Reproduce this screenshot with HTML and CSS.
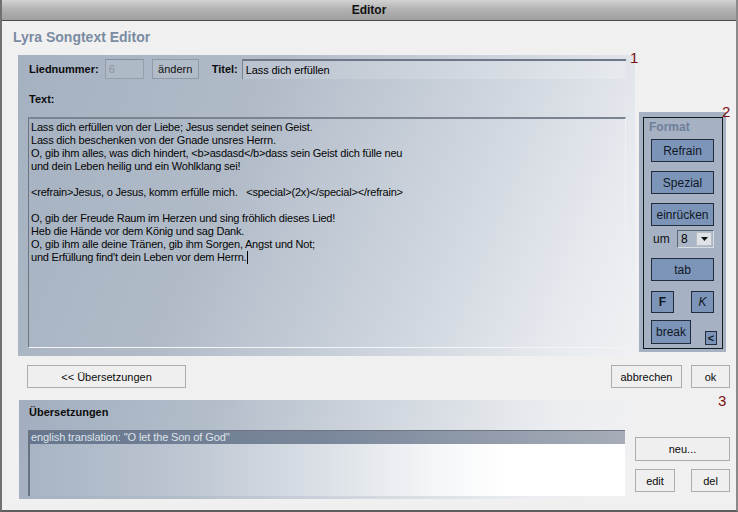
FILE: index.html
```html
<!DOCTYPE html>
<html lang="de">
<head>
<meta charset="utf-8">
<title>Editor</title>
<link rel="stylesheet" href="styles.css">
</head>
<body>
<div class="window">
  <header class="titlebar">Editor</header>
  <main class="content">
    <h1 class="app-title">Lyra Songtext Editor</h1>
    <div class="main-row">
      <section class="panel editor-panel">
        <div class="meta-row">
          <span class="lbl">Liednummer:</span>
          <span class="num-field">6</span>
          <button class="flat-btn">ändern</button>
          <span class="lbl title-lbl">Titel:</span>
          <span class="title-field">Lass dich erfüllen</span>
        </div>
        <div class="lbl text-lbl">Text:</div>
        <div class="text-box">Lass dich erfüllen von der Liebe; Jesus sendet seinen Geist.
Lass dich beschenken von der Gnade unsres Herrn.
O, gib ihm alles, was dich hindert, &lt;b&gt;asdasd&lt;/b&gt;dass sein Geist dich fülle neu
und dein Leben heilig und ein Wohlklang sei!

&lt;refrain&gt;Jesus, o Jesus, komm erfülle mich.   &lt;special&gt;(2x)&lt;/special&gt;&lt;/refrain&gt;

O, gib der Freude Raum im Herzen und sing fröhlich dieses Lied!
Heb die Hände vor dem König und sag Dank.
O, gib ihm alle deine Tränen, gib ihm Sorgen, Angst und Not;
und Erfüllung find't dein Leben vor dem Herrn.<span class="caret"></span></div>
      </section>
      <aside class="format-panel">
        <div class="format-inner">
          <div class="format-title">Format</div>
          <button class="fmt-btn btn-refrain">Refrain</button>
          <button class="fmt-btn btn-spezial">Spezial</button>
          <button class="fmt-btn btn-indent">einrücken</button>
          <div class="um-row">
            <span class="um-lbl">um</span>
            <span class="select"><span class="select-val">8</span><span class="select-arrow"><svg width="7" height="4" viewBox="0 0 7 4"><path d="M0 0H7L3.5 4Z" fill="#111"/></svg></span></span>
          </div>
          <button class="fmt-btn btn-tab">tab</button>
          <div class="fk-row">
            <button class="fmt-btn small-btn bold">F</button>
            <button class="fmt-btn small-btn italic">K</button>
          </div>
          <div class="break-row">
            <button class="fmt-btn btn-break">break</button>
            <button class="fmt-btn btn-lt">&lt;</button>
          </div>
        </div>
      </aside>
    </div>
    <div class="action-row">
      <button class="win-btn btn-trans">&lt;&lt; Übersetzungen</button>
      <div class="action-right">
        <button class="win-btn btn-cancel">abbrechen</button>
        <button class="win-btn btn-ok">ok</button>
      </div>
    </div>
    <div class="trans-row">
      <section class="panel trans-panel">
        <div class="lbl trans-lbl">Übersetzungen</div>
        <div class="list-box">
          <div class="list-item selected">english translation: "O let the Son of God"</div>
        </div>
      </section>
      <div class="trans-buttons">
        <button class="win-btn btn-new">neu...</button>
        <div class="ed-row">
          <button class="win-btn btn-edit">edit</button>
          <button class="win-btn btn-del">del</button>
        </div>
      </div>
    </div>
  </main>
  <span class="marker m1">1</span>
  <span class="marker m2">2</span>
  <span class="marker m3">3</span>
</div>
</body>
</html>
```

FILE: styles.css
```css
* { box-sizing: border-box; }
html, body { margin: 0; padding: 0; }
body {
  background: #f0f0f0;
  font-family: "Liberation Sans", Arial, sans-serif;
  font-size: 11px;
  color: #000;
}
button {
  font-family: "Liberation Sans", Arial, sans-serif;
  margin: 0;
  padding: 0;
  cursor: default;
}
.window {
  position: relative;
  width: 738px;
  height: 512px;
  background: #f0f0f0;
  border-left: 2px solid #707070;
  border-right: 2px solid #8a8a8a;
  border-bottom: 2px solid #5e5e5e;
  display: flex;
  flex-direction: column;
  overflow: hidden;
}
.titlebar {
  height: 21px;
  line-height: 20px;
  border-bottom: 1px solid #4c4c4c;
  background: linear-gradient(#d2d2d2, #b3b3b3 45%, #9f9f9f);
  text-align: center;
  font-weight: bold;
  font-size: 12px;
  color: #111;
}
.content {
  flex: 1;
  display: flex;
  flex-direction: column;
}
.app-title {
  margin: 8px 0 0 11px;
  font-size: 14px;
  line-height: 17px;
  font-weight: bold;
  color: #7a8ba2;
}
.main-row {
  display: flex;
  margin: 9px 0 0 16px;
  gap: 4px;
}
.panel {
  display: flex;
  flex-direction: column;
}
.editor-panel {
  width: 617px;
  height: 301px;
  padding: 4px 9px 8px 10px;
  background: linear-gradient(112deg, #a5b1c1 0%, #b1bbc8 35%, #cdd4dd 65%, #e6e9ee 88%, #eff1f4 100%);
}
.lbl {
  font-weight: bold;
  font-size: 11px;
  color: #0c0c0c;
}
.meta-row {
  display: flex;
  align-items: center;
  height: 20px;
}
.meta-row .lbl:first-child { margin-left: 1px; }
.num-field {
  width: 39px;
  height: 20px;
  margin-left: 6px;
  padding: 3px 0 0 3px;
  border: 1px solid #949eac;
  border-top-color: #848e9c;
  background: rgba(255,255,255,0.06);
  color: #8c94a0;
  line-height: 13px;
}
.flat-btn {
  width: 47px;
  height: 20px;
  margin-left: 8px;
  background: #b2bcc9;
  border: 1px solid #909aa8;
  font-size: 11px;
  color: #111;
}
.title-lbl { margin-left: 13px; }
.title-field {
  flex: 1;
  height: 20px;
  margin-left: 4px;
  padding: 3px 0 0 3px;
  line-height: 13px;
  background: linear-gradient(90deg, rgba(255,255,255,0.12), rgba(255,255,255,0.18));
  border-top: 2px solid #6d7787;
  border-left: 1px solid #7a8493;
  letter-spacing: -0.1px;
}
.text-lbl {
  margin: 14px 0 0 1px;
  line-height: 13px;
}
.text-box {
  flex: 1;
  margin-top: 11px;
  border-top: 2px solid #7b8391;
  border-left: 1px solid #6c7482;
  border-right: 1px solid #eef1f4;
  border-bottom: 1px solid #f2f4f6;
  padding: 2px 2px 0 2px;
  white-space: pre;
  line-height: 13px;
  font-size: 11px;
  letter-spacing: -0.2px;
  color: #050505;
  overflow: hidden;
}
.caret {
  display: inline-block;
  width: 1px;
  height: 13px;
  background: #000;
  vertical-align: -3px;
  margin-left: 1px;
}

/* Format panel */
.format-panel {
  width: 87px;
  height: 240px;
  margin-top: 57px;
  padding: 5px 3px 3px 4px;
  background: #a6b2c3;
}
.format-inner {
  height: 100%;
  border: 1px solid #161a20;
  padding: 2px 0 0 7px;
  display: flex;
  flex-direction: column;
  align-items: flex-start;
}
.format-title {
  margin-left: -2px;
  font-weight: bold;
  font-size: 12px;
  line-height: 14px;
  color: #6f7f98;
}
.fmt-btn {
  background: #7c94b8;
  border: 1px solid #232c3a;
  color: #101826;
  font-size: 12px;
  height: 23px;
  width: 63px;
}
.btn-refrain { margin-top: 5px; }
.btn-spezial { margin-top: 9px; }
.btn-indent { margin-top: 9px; }
.um-row {
  margin-top: 4px;
  width: 63px;
  height: 18px;
  display: flex;
  align-items: center;
  justify-content: space-between;
}
.um-lbl {
  font-size: 12px;
  margin-left: 2px;
  color: #111;
}
.select {
  width: 37px;
  height: 18px;
  display: flex;
  align-items: center;
  justify-content: space-between;
  padding: 0 1px 0 3px;
  border-top: 1px solid #5d6573;
  border-left: 1px solid #5d6573;
  border-right: 1px solid #d8dde4;
  border-bottom: 1px solid #d8dde4;
  background: #aab6c6;
  font-size: 12px;
}
.select-arrow {
  width: 16px;
  height: 14px;
  background: #dfe2e6;
  border: 1px solid #b8bec6;
  display: flex;
  align-items: center;
  justify-content: center;
}
.select-arrow svg { display: block; }
.btn-tab { margin-top: 10px; }
.fk-row {
  margin-top: 10px;
  width: 63px;
  display: flex;
  justify-content: space-between;
}
.small-btn {
  width: 23px;
  height: 22px;
}
.bold { font-weight: bold; }
.italic { font-style: italic; }
.break-row {
  margin-top: 7px;
  display: flex;
  align-items: flex-end;
}
.btn-break {
  width: 40px;
  height: 24px;
}
.btn-lt {
  width: 12px;
  height: 14px;
  margin-left: 14px;
  margin-bottom: -1px;
  font-size: 11px;
  line-height: 10px;
  font-weight: bold;
}

/* action row */
.win-btn {
  height: 23px;
  background: #efefef;
  border: 1px solid #acacac;
  font-size: 11px;
  color: #0a0a0a;
}
.action-row {
  display: flex;
  justify-content: space-between;
  margin: 9px 6px 0 25px;
}
.btn-trans { width: 159px; }
.action-right {
  display: flex;
  gap: 9px;
}
.btn-cancel { width: 71px; }
.btn-ok { width: 39px; }

/* translations */
.trans-row {
  display: flex;
  margin: 12px 0 0 17px;
}
.trans-panel {
  width: 614px;
  height: 99px;
  padding: 6px 8px 3px 9px;
  background: linear-gradient(108deg, #a2aebf 0%, #b3bdca 30%, #d3d9e0 60%, #eceef1 85%, #f1f1f2 100%);
}
.trans-lbl {
  line-height: 13px;
  margin-left: 1px;
}
.list-box {
  flex: 1;
  margin-top: 11px;
  border-top: 1px solid #6e7684;
  border-left: 2px solid #6a7280;
  background: linear-gradient(90deg, #a8b4c4 0%, #bcc5d1 25%, #dce1e7 50%, #f4f6f8 68%, #ffffff 80%);
}
.list-item {
  height: 13px;
  line-height: 13px;
  padding-left: 1px;
  font-size: 11px;
  letter-spacing: -0.1px;
}
.list-item.selected {
  background: linear-gradient(90deg, #66768e 0%, #7a879b 50%, #a6adb8 100%);
  color: #dfe3e9;
}
.trans-buttons {
  margin: 37px 0 0 2px;
  width: 95px;
  display: flex;
  flex-direction: column;
  gap: 8px;
}
.btn-new {
  width: 95px;
  height: 24px;
}
.ed-row {
  display: flex;
  justify-content: space-between;
}
.btn-edit { width: 40px; }
.btn-del { width: 39px; }

/* annotation markers */
.marker {
  position: absolute;
  font-family: "Liberation Sans", Arial, sans-serif;
  font-size: 15px;
  line-height: 15px;
  color: #7a1010;
}
.m1 { left: 628px; top: 50px; }
.m2 { left: 720px; top: 104px; }
.m3 { left: 716px; top: 393px; }
```
